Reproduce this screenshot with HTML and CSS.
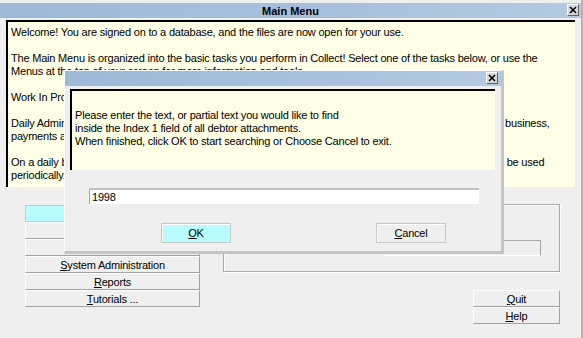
FILE: index.html
```html
<!DOCTYPE html>
<html lang="en">
<head>
    <meta charset="UTF-8">
    <title>Main Menu</title>
    <link rel="stylesheet" href="styles.css">
</head>
<body>
    <div class="window">
        <div class="titlebar">
            <span class="title">Main Menu</span>
            <span class="close-btn">
                <svg width="12" height="12" viewBox="0 0 12 12">
                    <path d="M3 3 L9 9 M9 3 L3 9" stroke="#000" stroke-width="1.6"/>
                </svg>
            </span>
        </div>

        <div class="info">
            <p>Welcome! You are signed on to a database, and the files are now open for your use.</p>
            <p>The Main Menu is organized into the basic tasks you perform in Collect! Select one of the tasks below, or use the<br>Menus at the top of your screen for more information and tools.</p>
            <p>Work In Process tasks are the accounts you are currently working on.</p>
            <p>Daily Administration tasks are the things that you need to do every day in the normal course of doing your business,<br>payments and letters, reports and so on.</p>
            <p>On a daily basis you may also find that some of the System Administration maintenance tasks will need to be used<br>periodically.</p>
        </div>

        <div class="lower">
            <div class="tasks">
                <button class="task task-active">Work In Process</button>
                <button class="task">Daily Administration</button>
                <button class="task">Periodic Tasks</button>
                <button class="task"><u>S</u>ystem Administration</button>
                <button class="task"><u>R</u>eports</button>
                <button class="task"><u>T</u>utorials ...</button>
            </div>
            <div class="group">
                <div class="group-field"></div>
            </div>
            <div class="side">
                <button class="task side-btn"><u>Q</u>uit</button>
                <button class="task side-btn"><u>H</u>elp</button>
            </div>
        </div>

        <div class="dialog">
            <div class="titlebar dialog-titlebar">
                <span class="title"></span>
                <span class="close-btn">
                    <svg width="12" height="12" viewBox="0 0 12 12">
                        <path d="M3 3 L9 9 M9 3 L3 9" stroke="#000" stroke-width="1.6"/>
                    </svg>
                </span>
            </div>
            <div class="prompt">
                Please enter the text, or partial text you would like to find<br>
                inside the Index 1 field of all debtor attachments.<br>
                When finished, click OK to start searching or Choose Cancel to exit.
            </div>
            <input class="search-input" type="text" value="1998">
            <div class="dialog-buttons">
                <button class="dlg-btn dlg-ok"><u>O</u>K</button>
                <button class="dlg-btn"><u>C</u>ancel</button>
            </div>
        </div>
    </div>
</body>
</html>
```

FILE: styles.css
```css
body {
    margin: 0;
    padding: 0;
    background-color: #efefef;
    font-family: "Liberation Sans", Arial, sans-serif;
    font-size: 11px;
    letter-spacing: -0.2px;
    color: #000000;
}

.window {
    position: relative;
    width: 583px;
    height: 338px;
    box-sizing: border-box;
    padding-top: 3px;
    background-color: #efefef;
    border-right: 2px solid #b4b4b4;
    overflow: hidden;
}

.titlebar {
    height: 15px;
    display: flex;
    align-items: center;
    justify-content: center;
    position: relative;
    background: linear-gradient(to right, #9cb9d7 0%, #a3bfdc 35%, #a8c0dc 60%, #b4cae3 100%);
}

.title {
    font-weight: bold;
    letter-spacing: 0;
}

.close-btn {
    position: absolute;
    right: 2px;
    top: 1px;
    width: 12px;
    height: 12px;
    box-sizing: border-box;
    background-color: #d8d8d8;
    border: 1px solid;
    border-color: #ffffff #606060 #606060 #ffffff;
    display: flex;
}

.close-btn svg {
    margin: -1px;
}

.info {
    margin: 2px 6px 0 6px;
    height: 167px;
    box-sizing: border-box;
    padding: 4px 3px;
    background-color: #ffffe7;
    border-top: 2px solid #000000;
    border-left: 2px solid #000000;
    line-height: 13px;
    white-space: nowrap;
    overflow: hidden;
}

.info p {
    margin: 0 0 13px 0;
}

.lower {
    display: grid;
    grid-template-columns: 175px 337px;
    grid-template-rows: 68px auto;
    column-gap: 23px;
    padding: 17px 0 0 25px;
}

.tasks {
    grid-row: 1 / span 2;
    margin-top: 1px;
    display: flex;
    flex-direction: column;
}

.task {
    height: 17px;
    padding: 0;
    font-family: inherit;
    font-size: 11px;
    letter-spacing: -0.2px;
    color: #000000;
    background-color: #efefef;
    border: 1px solid;
    border-color: #ffffff #a0a0a0 #a0a0a0 #ffffff;
    text-align: center;
}

.task-active {
    background-color: #b8fcff;
    border-color: #c8c8c8;
}

.group {
    display: flex;
    justify-content: flex-end;
    align-items: flex-start;
    padding: 35px 18px 0 0;
    box-sizing: border-box;
    border: 1px solid #a8a8a8;
    box-shadow: 1px 1px 0 #ffffff, inset 1px 1px 0 #ffffff;
}

.group-field {
    width: 157px;
    height: 16px;
    box-sizing: border-box;
    border: 1px solid;
    border-color: #a8a8a8 #a8a8a8 #ffffff #ffffff;
}

.side {
    grid-column: 2;
    justify-self: end;
    margin-top: 18px;
    display: flex;
    flex-direction: column;
    width: 87px;
}

.dialog {
    position: absolute;
    left: 64px;
    top: 70px;
    width: 440px;
    height: 184px;
    box-sizing: border-box;
    background-color: #efefef;
    border-left: 1px solid #ffffff;
    border-top: 1px solid #ffffff;
    border-right: 3px solid #c4c4c4;
    border-bottom: 3px solid #c4c4c4;
}

.dialog-titlebar .close-btn {
    right: 3px;
}

.prompt {
    margin: 3px 6px 0 5px;
    height: 81px;
    box-sizing: border-box;
    padding: 18px 3px 0 3px;
    background-color: #ffffe7;
    border-top: 2px solid #000000;
    border-left: 2px solid #000000;
    line-height: 13px;
}

.search-input {
    display: block;
    margin: 18px 0 0 24px;
    width: 390px;
    height: 16px;
    box-sizing: border-box;
    padding: 0 2px;
    font-family: inherit;
    font-size: 11px;
    letter-spacing: -0.2px;
    background-color: #ffffff;
    border: none;
    border-top: 2px solid #c0c0c0;
    border-left: 1px solid #a8a8a8;
    outline: none;
}

.dialog-buttons {
    display: flex;
    justify-content: space-between;
    margin-top: 19px;
    padding: 0 55px 0 96px;
}

.dlg-btn {
    width: 70px;
    height: 20px;
    padding: 0;
    font-family: inherit;
    font-size: 11px;
    letter-spacing: -0.2px;
    color: #000000;
    background-color: #efefef;
    border: 1px solid #c8c8c8;
    box-shadow: inset 1px 1px 0 #ffffff;
}

.dlg-ok {
    background-color: #b8fcff;
}
```
